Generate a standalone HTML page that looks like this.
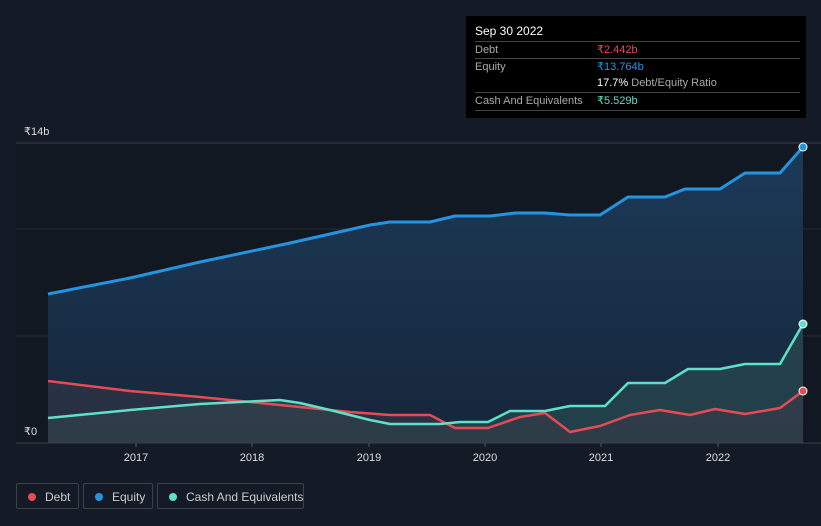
<!DOCTYPE html>
<html><head><meta charset="utf-8"><style>
body{margin:0;width:821px;height:526px;background:#151b26;font-family:"Liberation Sans",sans-serif;overflow:hidden;position:relative}
.tt{position:absolute;left:466px;top:16px;width:340px;height:102px;background:#000;color:#fff;font-size:11px}
.tt .h{position:absolute;left:9px;top:8px;font-size:12px}
.row{position:absolute;left:9px;width:325px;border-top:1px solid #444;height:17px;line-height:17px;color:#aaa;white-space:nowrap}
.row span{position:absolute;left:122px}
.lg{position:absolute;top:483px;height:26px;border:1px solid #3c424c;border-radius:2px;color:#ccc;font-size:12px;line-height:26px;box-sizing:border-box;white-space:nowrap}
.lg i{position:absolute;left:11px;top:9px;width:8px;height:8px;border-radius:50%}
.lg b{font-weight:normal;position:absolute;left:28px}
</style></head><body>
<svg width="821" height="526" style="position:absolute;left:0;top:0">
<defs><linearGradient id="g" x1="0" y1="0" x2="0" y2="1"><stop offset="0" stop-color="#1c3a58"/><stop offset="1" stop-color="#16263a"/></linearGradient></defs>
<rect x="16" y="143" width="805" height="300" fill="#121822"/>
<line x1="16" y1="143" x2="821" y2="143" stroke="#3a404a"/>
<line x1="16" y1="229" x2="821" y2="229" stroke="#252b35"/>
<line x1="16" y1="336" x2="821" y2="336" stroke="#252b35"/>
<polygon fill="url(#g)" points="48,294 130,278 200,262 290,243 370,225 390,222 430,222 455,216 490,216 515,213 545,213 570,215 600,215 628,197 665,197 685,189 720,189 745,173 780,173 803,147 803,443 48,443"/>
<polygon fill="#2a4a50" opacity="0.7" points="48,418 130,410 200,404 280,400 300,403 330,410 370,420 390,424 440,424 460,422 488,422 510,411 545,411 570,406 605,406 628,383 665,383 688,369 720,369 745,364 780,364 803,324 803,443 48,443"/>
<polygon fill="#3a3a48" opacity="0.5" points="48,381 130,391 200,397 250,402 300,407 350,412 390,415 430,415 455,428 488,428 520,417 545,413 570,432 600,426 630,415 660,410 690,415 715,409 745,414 780,408 803,391 803,443 48,443"/>
<polyline fill="none" stroke="#2394df" stroke-width="3" stroke-linejoin="round" points="48,294 130,278 200,262 290,243 370,225 390,222 430,222 455,216 490,216 515,213 545,213 570,215 600,215 628,197 665,197 685,189 720,189 745,173 780,173 803,147"/>
<polyline fill="none" stroke="#e64b55" stroke-width="2.5" stroke-linejoin="round" points="48,381 130,391 200,397 250,402 300,407 350,412 390,415 430,415 455,428 488,428 520,417 545,413 570,432 600,426 630,415 660,410 690,415 715,409 745,414 780,408 803,391"/>
<polyline fill="none" stroke="#5fe0c8" stroke-width="2.5" stroke-linejoin="round" points="48,418 130,410 200,404 280,400 300,403 330,410 370,420 390,424 440,424 460,422 488,422 510,411 545,411 570,406 605,406 628,383 665,383 688,369 720,369 745,364 780,364 803,324"/>
<circle cx="803" cy="147" r="4" fill="#2394df" stroke="#fff" stroke-width="1"/>
<circle cx="803" cy="324" r="4" fill="#5fe0c8" stroke="#fff" stroke-width="1"/>
<circle cx="803" cy="391" r="4" fill="#e64b55" stroke="#fff" stroke-width="1"/>
<line x1="16" y1="443" x2="821" y2="443" stroke="#3a404a"/>
<g stroke="#555" ><line x1="136" y1="443" x2="136" y2="447"/><line x1="252" y1="443" x2="252" y2="447"/><line x1="369" y1="443" x2="369" y2="447"/><line x1="485" y1="443" x2="485" y2="447"/><line x1="601" y1="443" x2="601" y2="447"/><line x1="718" y1="443" x2="718" y2="447"/></g>
<g fill="#ddd" font-size="11" text-anchor="middle" font-family="Liberation Sans"><text x="136" y="461">2017</text><text x="252" y="461">2018</text><text x="369" y="461">2019</text><text x="485" y="461">2020</text><text x="601" y="461">2021</text><text x="718" y="461">2022</text></g>
<text x="24" y="135" fill="#ddd" font-size="11" font-family="Liberation Sans">₹14b</text>
<text x="24" y="435" fill="#ddd" font-size="11" font-family="Liberation Sans">₹0</text>
</svg>
<div class="tt"><div class="h">Sep 30 2022</div>
<div class="row" style="top:25px">Debt<span style="color:#e64b55">₹2.442b</span></div>
<div class="row" style="top:42px">Equity<span style="color:#2394df">₹13.764b</span></div>
<div class="row" style="top:59px;border-top:none"><span style="color:#fff">17.7% <em style="font-style:normal;color:#aaa">Debt/Equity Ratio</em></span></div>
<div class="row" style="top:76px;border-bottom:1px solid #444">Cash And Equivalents<span style="color:#5fe0c8">₹5.529b</span></div>
</div>
<div class="lg" style="left:16px;width:63px"><i style="background:#e64b55"></i><b>Debt</b></div>
<div class="lg" style="left:83px;width:70px"><i style="background:#2394df"></i><b>Equity</b></div>
<div class="lg" style="left:157px;width:147px"><i style="background:#5fe0c8"></i><b>Cash And Equivalents</b></div>
</body></html>
